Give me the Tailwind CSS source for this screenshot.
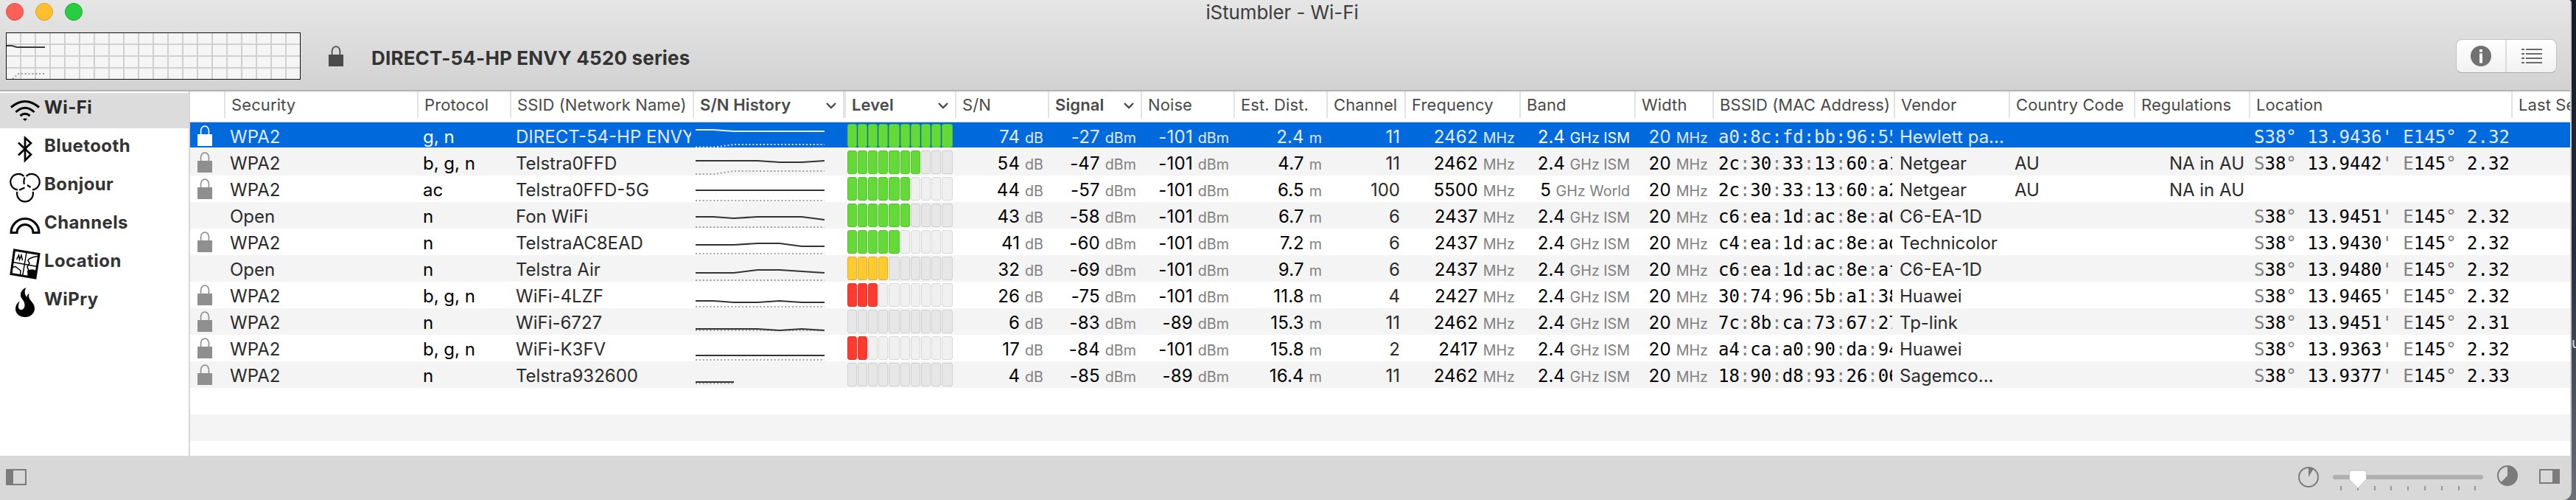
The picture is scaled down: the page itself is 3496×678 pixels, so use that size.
<!DOCTYPE html>
<html lang="en">
<head>
    <meta charset="utf-8">
    <title>iStumbler - Wi-Fi</title>
    <script src="https://cdn.jsdelivr.net/npm/@tailwindcss/browser@4"></script>
</head>
<body class="w-[3496px] h-[678px] overflow-hidden flex bg-gradient-to-b from-[#141b27] via-[#272d3d] to-[#6b7076] font-['Inter','Liberation_Sans',sans-serif]">

<div class="w-[3490px] h-[678px] shrink-0 flex flex-col bg-white border-r-2 border-[#cfcfcf] rounded-tr-sm rounded-br-[12px] overflow-hidden">

    <!-- title bar and toolbar -->
    <header class="h-[124px] shrink-0 flex flex-col bg-gradient-to-b from-[#e6e6e6] to-[#d2d2d2] border-b-2 border-[#b1b1b1]">
        <div class="h-8 flex items-center relative">
            <div class="flex gap-4 pl-2">
                <span class="size-6 rounded-full bg-[#ff6058] border border-[#e2463f]"></span>
                <span class="size-6 rounded-full bg-[#ffbf2e] border border-[#dea123]"></span>
                <span class="size-6 rounded-full bg-[#28cd41] border border-[#1aab29]"></span>
            </div>
            <h1 class="absolute left-0 top-0 w-[3480px] text-center text-[26px] leading-[33px] tracking-[-0.1px] text-[#3d3d3d]">iStumbler - Wi-Fi</h1>
        </div>
        <div class="flex pt-3 pl-2">
            <svg class="w-[400px] h-16 shrink-0" viewBox="0 0 400 64">
                <rect x=".5" y=".5" width="399" height="63" fill="#f5f5f5"/>
                <g id="grid" stroke="#d0d0d0" stroke-width="2"></g>
                <path d="M1 18H8L15 20H53" fill="none" stroke="#3a3a3a" stroke-width="2"/>
                <path d="M9 63L17 56H53" fill="none" stroke="#999" stroke-width="2" stroke-dasharray="2 2.85"/>
                <rect x=".5" y=".5" width="399" height="63" fill="none" stroke="#111"/>
            </svg>
            <svg class="w-5 h-7 ml-[38px] mt-[18px] text-[#4b4b4b]" viewBox="0 0 20 28">
                <path d="M4.8 13C3.5 6 5.5 1 10 1s6.500 5 5.200 12" fill="none" stroke="currentColor" stroke-width="1.700"/>
                <path d="M0 12h20v16H0z" fill="currentColor"/>
            </svg>
            <h2 class="ml-[38px] mt-[19px] text-[26px] leading-8 font-bold tracking-[0.170px] text-[#333]">DIRECT-54-HP ENVY 4520 series</h2>
            <div class="ml-auto mr-[18px] mt-[9px] w-[137px] h-[46px] flex rounded-lg border border-[#c2c2c2] border-b-[#aaa] bg-gradient-to-b from-white to-[#f1f1f1]">
                <div class="w-[66px] flex items-center justify-center border-r-2 border-[#dcdcdc] box-content">
                    <svg class="size-7" viewBox="0 0 28 28">
                        <circle cx="14" cy="14" r="14" fill="#717171"/>
                        <path d="M12 5h4v3.500h-4zM12 10.500h4v13h-4z" fill="#fff"/>
                    </svg>
                </div>
                <div class="flex-1 flex items-center justify-center">
                    <svg class="w-7 h-5" viewBox="0 0 28 20">
                        <path d="M0 1h4M6 1h22M0 7h4M6 7h22M0 13h4M6 13h22M0 19h4M6 19h22" stroke="#6b6b6b" stroke-width="2"/>
                    </svg>
                </div>
            </div>
        </div>
    </header>

    <div class="h-[494px] flex">
        <!-- sidebar -->
        <nav class="w-[258px] shrink-0 border-r-2 border-[#d6d6d6] pt-[2px] flex flex-col gap-1 text-[24px] leading-[40px] font-bold tracking-[0.400px] text-[#333]">
            <a class="h-12 flex gap-[4px] pl-3 bg-[#dcdcdc] text-[#2a2a2a]">
                <svg class="w-11 h-12" viewBox="0 0 44 48" fill="none" stroke="#000" stroke-width="3">
                    <path d="M3 19.500Q22 3.500 41 19.500M9.500 26Q22 14.500 34.500 26M15.500 31Q22 25.500 28.500 31"/>
                    <path d="M19 35.500Q22 33.500 25 35.500L22 38z" fill="#000" stroke="none"/>
                </svg>
                <span>Wi-Fi</span>
            </a>
            <a class="h-12 flex gap-[4px] pl-3">
                <svg class="w-11 h-12" viewBox="0 0 44 48" fill="none" stroke="#000" stroke-width="2.700">
                    <path d="M13 15.500L30 31.500L22 39.500V9L30 16L13 32.500"/>
                </svg>
                <span>Bluetooth</span>
            </a>
            <a class="h-12 flex gap-[4px] pl-3">
                <svg class="w-11 h-12" viewBox="0 0 44 48" fill="none" stroke="#000" stroke-width="2.200">
                    <path d="M20.500 9A10.700 10.700 0 1 0 12 27.300M23.500 9A10.700 10.700 0 1 1 32 27.300M11.400 30A10.900 10.900 0 1 0 32.600 30"/>
                    <path d="M21.500 10.500Q19.800 15 20.800 20M14 27.700L21.500 24.500M25 21L29.500 24"/>
                </svg>
                <span>Bonjour</span>
            </a>
            <a class="h-12 flex gap-[4px] pl-3">
                <svg class="w-11 h-12" viewBox="0 0 44 48" fill="none" stroke="#000" stroke-width="3">
                    <path d="M3 33.500A19 19 0 0 1 41 33.500H33A11 11 0 0 0 11 33.500Z"/>
                </svg>
                <span>Channels</span>
            </a>
            <a class="h-12 flex gap-[4px] pl-3">
                <svg class="w-11 h-12" viewBox="0 0 44 48" fill="none" stroke="#000" stroke-width="3">
                    <path d="M7.500 5L41 10.500L36 43L3 37.500Z"/>
                    <path d="M24 8L18.700 40M5.500 21.500L39 27.500" stroke-width="1.500"/>
                    <path d="M10.500 18L13.500 12L14.500 18L17 12L18.500 19M39 13.500C33 14 26 17 26 19L28 23L25 28L27 33M4 28.500L9 27.500L16 33L15.500 38" stroke-width="1.500"/>
                    <path d="M25 33q5-3 10-1l2 2-1.500 9-10-2z" fill="#000" stroke="none"/>
                </svg>
                <span>Location</span>
            </a>
            <a class="h-12 flex gap-[4px] pl-3">
                <svg class="w-11 h-12" viewBox="0 0 44 48">
                    <path d="M23.500 4.300C19 5 15.500 10 16 15c.4 4 5.500 6.500 5.500 12.500 0 4-2 6.500-5 6.500-3.500 0-5-4-1.800-11.500C11 25 9 28.500 9 33c0 6.500 6 11 13 11s13-4.500 13-12c0-5.500-4.500-9-7-13-1.200-2.200-1-4.500-.3-7-2 1-3 2.500-3.200 5C21.500 14 20.500 8 23.500 4.300z"/>
                </svg>
                <span>WiPry</span>
            </a>
        </nav>

        <!-- network table -->
        <main class="w-[3230px] shrink-0 overflow-hidden">
            <div id="head" class="h-[42px] flex border-b border-[#d0d0d0] text-[22px] leading-[36px] tracking-[0.100px] text-[#4a4a4a]"></div>
            <div id="rows"></div>
        </main>
    </div>

    <!-- bottom bar -->
    <footer class="h-[60px] shrink-0 bg-[#d8d8d8] flex justify-between">
        <svg class="w-7 h-[22px] ml-2 mt-[18px]" viewBox="0 0 28 22">
            <path d="M1 1h26v20H1z" fill="none" stroke="#7b7b7b" stroke-width="2"/>
            <path d="M0 0h10v22H0z" fill="#7b7b7b"/>
        </svg>
        <div class="flex items-start">
            <svg class="size-7 mt-[15px]" viewBox="0 0 28 28">
                <circle cx="14" cy="14" r="13" fill="none" stroke="#7b7b7b" stroke-width="2"/>
                <path d="M14 14V1A13 13 0 0 1 20.500 3z" fill="#7b7b7b"/>
            </svg>
            <svg class="w-[204px] h-8 ml-[19px] mt-[18px]" viewBox="0 0 204 32">
                <rect y="8" width="204" height="6" rx="3" fill="#b0b0b0"/>
                <g id="ticks" fill="#999"></g>
                <path d="M26 2h16q3.500 0 3.500 3.500V14L34 26 22.500 14V5.500Q22.500 2 26 2z" fill="#fff" stroke="#b8b8b8" stroke-width=".8"/>
            </svg>
            <svg class="size-7 ml-[19px] mt-[13px]" viewBox="0 0 28 28">
                <circle cx="14" cy="14" r="13" fill="none" stroke="#7b7b7b" stroke-width="2"/>
                <path d="M14 14V1A13 13 0 1 1 4.800 23.200z" fill="#7b7b7b"/>
            </svg>
            <svg class="w-7 h-5 ml-[29px] mr-[14px] mt-[18px]" viewBox="0 0 28 20">
                <path d="M1 1h26v18H1z" fill="none" stroke="#7b7b7b" stroke-width="2"/>
                <path d="M18 0h10v20H18z" fill="#7b7b7b"/>
            </svg>
        </div>
    </footer>
</div>

<!-- sliver of the desktop behind the window -->
<div class="w-[6px] overflow-hidden pt-[453px] text-[20px] leading-6 text-[#ddd]">u</div>

<script>
// title, width class, emphasised
const columns = [
    ['', 'w-[48px]'],
    ['Security', 'w-[262px]'],
    ['Protocol', 'w-[126px]'],
    ['SSID (Network Name)', 'w-[248px]'],
    ['S/N History', 'w-[206px]', true],
    ['Level', 'w-[150px]', true],
    ['S/N', 'w-[126px]'],
    ['Signal', 'w-[126px]', true],
    ['Noise', 'w-[126px]'],
    ['Est. Dist.', 'w-[126px]'],
    ['Channel', 'w-[106px]'],
    ['Frequency', 'w-[156px]'],
    ['Band', 'w-[156px]'],
    ['Width', 'w-[106px]'],
    ['BSSID (MAC Address)', 'w-[246px]'],
    ['Vendor', 'w-[156px]'],
    ['Country Code', 'w-[170px]'],
    ['Regulations', 'w-[156px]'],
    ['Location', 'w-[356px]'],
    ['Last Seen', 'w-[140px]'],
];

// security, protocol, ssid, line, noise line, level, s/n, signal, noise, distance, channel, frequency, band, bssid, vendor, country, latitude, longitude
const networks = [
    ['WPA2', 'g, n', 'DIRECT-54-HP ENVY 4520 series', '0,10 24,10 52,12 175,12', '0,33.500 26,33.500 52,30 175,30', 10, '74', '-27', '-101', '2.4', '11', '2462', '2.4 GHz ISM', 'a0:8c:fd:bb:96:55', 'Hewlett pa...', '', '13.9436', '2.32'],
    ['WPA2', 'b, g, n', 'Telstra0FFD', '0,16 84,16 114,18 144,18 175,16', '0,34 26,34 52,30 175,30', 7, '54', '-47', '-101', '4.7', '11', '2462', '2.4 GHz ISM', '2c:30:33:13:60:a1', 'Netgear', 'AU', '13.9442', '2.32'],
    ['WPA2', 'ac', 'Telstra0FFD-5G', '0,20 175,20', '0,34 175,34', 6, '44', '-57', '-101', '6.5', '100', '5500', '5 GHz World', '2c:30:33:13:60:a2', 'Netgear', 'AU', '', ''],
    ['Open', 'n', 'Fon WiFi', '0,20 24,20 52,22 84,20 144,20 175,24', '0,34 175,34', 6, '43', '-58', '-101', '6.7', '6', '2437', '2.4 GHz ISM', 'c6:ea:1d:ac:8e:a0', 'C6-EA-1D', '', '13.9451', '2.32'],
    ['WPA2', 'n', 'TelstraAC8EAD', '0,22 52,22 84,20 114,20 144,24 175,24', '0,34 175,34', 5, '41', '-60', '-101', '7.2', '6', '2437', '2.4 GHz ISM', 'c4:ea:1d:ac:8e:ad', 'Technicolor', '', '13.9430', '2.32'],
    ['Open', 'n', 'Telstra Air', '0,24 52,24 84,20 114,20 175,24', '0,34 175,34', 4, '32', '-69', '-101', '9.7', '6', '2437', '2.4 GHz ISM', 'c6:ea:1d:ac:8e:af', 'C6-EA-1D', '', '13.9480', '2.32'],
    ['WPA2', 'b, g, n', 'WiFi-4LZF', '0,26 24,26 52,28 84,28 114,26 144,28 175,28', '0,34 175,34', 3, '26', '-75', '-101', '11.8', '4', '2427', '2.4 GHz ISM', '30:74:96:5b:a1:38', 'Huawei', '', '13.9465', '2.32'],
    ['WPA2', 'n', 'WiFi-6727', '0,28 84,28 114,30 144,28 175,30', '0,30 175,30', 0, '6', '-83', '-89', '15.3', '11', '2462', '2.4 GHz ISM', '7c:8b:ca:73:67:27', 'Tp-link', '', '13.9451', '2.31'],
    ['WPA2', 'b, g, n', 'WiFi-K3FV', '0,28 175,28', '0,34 175,34', 2, '17', '-84', '-101', '15.8', '2', '2417', '2.4 GHz ISM', 'a4:ca:a0:90:da:94', 'Huawei', '', '13.9363', '2.32'],
    ['WPA2', 'n', 'Telstra932600', '0,28 52,28', '0,30 52,30', 0, '4', '-85', '-89', '16.4', '11', '2462', '2.4 GHz ISM', '18:90:d8:93:26:06', 'Sagemco...', '', '13.9377', '2.33'],
];

const chevron = '<svg class="w-[14px] h-[9px] mt-[15px] ml-auto mr-[9px]" viewBox="0 0 14 9"><path d="M1 1l6 6 6-6" fill="none" stroke="#4a4a4a" stroke-width="2.400"/></svg>';

document.getElementById('head').innerHTML = columns.map(([title, width, strong]) => {
    const rule = title === 'S/N History' ? 'border-r-4' : 'border-r-2';
    return `<div class="${width} ${rule} h-9 shrink-0 flex pl-[8px] border-[#e3e3e3] whitespace-nowrap ${strong ? 'font-semibold' : ''}"><span>${title}</span>${strong ? chevron : ''}</div>`;
}).join('');

const lock = '<svg class="w-5 h-7 mt-1 ml-[10px]" viewBox="0 0 20 28"><path d="M4.800 13C3.500 6 5.500 1 10 1s6.500 5 5.200 12" fill="none" stroke="currentColor" stroke-width="1.600"/><path d="M0 12h20v16H0z" fill="currentColor"/></svg>';

function cell(i, content, extra) {
    return `<div class="${columns[i][1]} shrink-0 overflow-hidden whitespace-nowrap ${extra}">${content}</div>`;
}

function row(n, index) {
    const selected = index === 0;
    const striped = index % 2 === 1;
    const text = selected ? 'text-[#e2eafb]' : 'text-[#2b2b2b]';
    const strong = selected ? 'text-[#e2eafb]' : 'text-black';
    const white = selected ? 'text-white' : 'text-black';
    const unit = selected ? '' : 'text-[#808080]';
    const left = 'pl-[6px] ' + text;
    const right = 'pr-[8px] text-right tracking-[0.200px] ' + strong;
    const value = (v, u) => `${v} <span class="text-[19.700px] tracking-[0px] ${unit}">${u}</span>`;
    const dim = s => `<span class="${unit}">${s}</span>`;

    const on = n[5] > 4 ? 'bg-[#63da38] border-[#57c22f]' : n[5] > 3 ? 'bg-[#ffcb2d] border-[#e2ad1c]' : 'bg-[#ff3b30] border-[#e8332a]';
    const off = striped ? 'bg-[#e7e7e7] border-[#cfcfcf]' : 'bg-[#f0f0f0] border-[#d8d8d8]';
    let bars = '';
    for (let b = 0; b < 10; b++) bars += `<i class="rounded-[3px] border ${b < n[5] ? on : off}"></i>`;

    const history = `<svg class="w-[180px] h-9 ml-[2px]" viewBox="0 0 180 36" fill="none" stroke-width="2">
        <polyline points="${n[4]}" stroke="${selected ? '#dbe6fa' : '#a0a0a0'}" stroke-dasharray="2 2.850"/>
        <polyline points="${n[3]}" stroke="${selected ? '#e6eefc' : '#333'}"/></svg>`;
    const [bandValue, ...bandUnit] = n[12].split(' ');
    const location = n[16] ? `${dim('S')}38${dim('°')} ${n[16]}${dim("'")} ${dim('E')}145${dim('°')} ${n[17]}` : '';
    const mono = "font-['DejaVu_Sans_Mono',monospace] whitespace-pre ";

    return `<div class="h-9 flex text-[24px] leading-[40px] ${selected ? 'bg-[#0069dc] border-b-2 border-white' : striped ? 'bg-[#f4f4f4]' : 'bg-white'}">
        ${cell(0, n[0] === 'Open' ? '' : lock, selected ? 'text-white' : 'text-[#8f8f8f]')}
        ${cell(1, n[0], left)}
        ${cell(2, n[1], 'pl-[6px] ' + white)}
        <div class="w-[248px] shrink-0 pl-[6px] pr-1 ${text}"><div class="overflow-hidden whitespace-nowrap">${n[2].slice(0, 17)}</div></div>
        ${cell(4, history, '')}
        ${cell(5, `<div class="h-8 ml-[2px] mt-[2px] grid grid-cols-[13px_13px_13px_13px_15px_13px_13px_13px_13px_15px] gap-px">${bars}</div>`, '')}
        ${cell(6, value(n[6], 'dB'), right)}
        ${cell(7, value(n[7], 'dBm'), right)}
        ${cell(8, value(n[8], 'dBm'), right)}
        ${cell(9, value(n[9], 'm'), right)}
        ${cell(10, n[10], 'pr-[8px] text-right ' + text)}
        ${cell(11, value(n[11], 'MHz'), right)}
        ${cell(12, value(bandValue, bandUnit.join(' ')), 'pr-[8px] text-right ' + white)}
        ${cell(13, value('20', 'MHz'), right)}
        <div class="w-[246px] shrink-0 pl-[6px] pr-1 ${mono + strong}"><div class="overflow-hidden">${n[13].split(':').join(dim(':'))}</div></div>
        ${cell(15, n[14], left)}
        ${cell(16, n[15], left)}
        ${cell(17, n[15] ? 'NA in AU' : '', 'pr-[8px] text-right ' + text)}
        ${cell(18, location, 'pl-[5px] ' + mono + strong)}
    </div>`;
}

document.getElementById('rows').innerHTML = networks.map(row).join('') +
    '<div class="h-9"></div><div class="h-9 bg-[#f4f4f4]"></div>';

let grid = '';
for (let x = 20; x < 400; x += 20) grid += `<path d="M${x} 0V64"/>`;
for (let y = 16; y < 64; y += 16) grid += `<path d="M0 ${y}H400"/>`;
document.getElementById('grid').innerHTML = grid;

let ticks = '';
for (let i = 0; i < 9; i++) ticks += `<rect x="${10 + Math.round(i * 22.8)}" y="23" width="2" height="6"/>`;
document.getElementById('ticks').innerHTML = ticks;
</script>
</body>
</html>
